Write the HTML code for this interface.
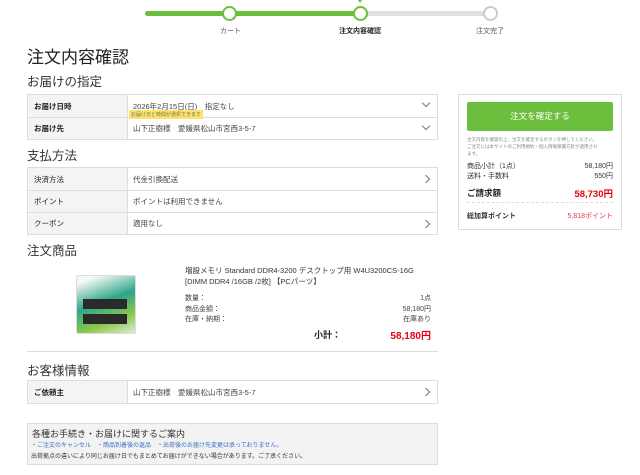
<!DOCTYPE html><html><head><meta charset="utf-8"><style>
*{margin:0;padding:0;box-sizing:border-box}
body{width:640px;height:475px;background:#fff;font-family:"Liberation Sans","Noto Sans CJK JP",sans-serif;color:#333;position:relative;overflow:hidden}
.a{position:absolute;white-space:nowrap}
.t{position:absolute;left:27px;width:411px;border:1px solid #ddd;font-size:7.5px}
.r{height:22px;display:flex;border-top:1px solid #ddd;align-items:center;position:relative}
.r:first-child{border-top:none}
.l{width:100px;height:100%;background:#f4f4f4;border-right:1px solid #ddd;padding-left:6px;display:flex;align-items:center;font-weight:bold;color:#222}
.v{padding-left:5px;color:#444}
.ch{position:absolute;right:8px;top:6px;width:6px;height:6px;border-right:1px solid #777;border-bottom:1px solid #777}
.dn{transform:rotate(45deg);top:5px}
.rt{transform:rotate(-45deg);top:8px}
h2{position:absolute;left:27px;font-size:12.5px;font-weight:normal;color:#333}
.c{position:absolute;width:15px;height:15px;border-radius:50%;background:#fff;border:2px solid #6cbf3c;top:6px}
</style></head><body>
<div class="a" style="left:145px;top:11px;width:345px;height:5px;background:#e0e0e0;border-radius:3px"></div>
<div class="a" style="left:145px;top:11px;width:216px;height:5px;background:#6cbf3c;border-radius:3px"></div>
<div class="c" style="left:222px"></div>
<div class="c" style="left:353px"></div>
<div class="c" style="left:483px;border-color:#ccc"></div>
<div class="a" style="left:358px;top:0;width:0;height:0;border-left:2px solid transparent;border-right:2px solid transparent;border-top:3px solid #6cbf3c"></div>
<div class="a" style="left:220px;top:26px;font-size:7px;color:#555">カート</div>
<div class="a" style="left:339px;top:26px;font-size:7px;font-weight:bold;color:#222">注文内容確認</div>
<div class="a" style="left:476px;top:26px;font-size:7px;color:#555">注文完了</div>
<div class="a" style="left:27px;top:43px;font-size:17px;color:#222">注文内容確認</div>
<h2 style="top:71px">お届けの指定</h2>
<div class="t" style="top:94px">
<div class="r"><div class="l">お届け日時</div><div class="v">2026年2月15日(日)　指定なし</div><div class="ch dn"></div></div>
<div class="r"><div class="l">お届け先</div><div class="v">山下正樹様　愛媛県松山市宮西3-5-7</div><div class="ch dn"></div></div>
</div>
<div class="a" style="left:129px;top:110px;background:#fde36b;font-size:5px;padding:1px 2px;color:#775">お届け日と時間が選択できます</div>
<h2 style="top:145px">支払方法</h2>
<div class="t" style="top:167px">
<div class="r"><div class="l" style="font-weight:normal">決済方法</div><div class="v">代金引換配送</div><div class="ch rt"></div></div>
<div class="r"><div class="l" style="font-weight:normal">ポイント</div><div class="v">ポイントは利用できません</div></div>
<div class="r"><div class="l" style="font-weight:normal">クーポン</div><div class="v">適用なし</div><div class="ch rt"></div></div>
</div>
<h2 style="top:240px">注文商品</h2>
<div class="a" style="left:76px;top:275px;width:60px;height:59px;background:linear-gradient(160deg,#f4f8f2 10%,#2fa58a 45%,#8cc84b 75%,#dfe8d8);border-radius:2px;border:1px solid #ddd"></div>
<div class="a" style="left:83px;top:299px;width:44px;height:10px;background:#2a2a2a"></div>
<div class="a" style="left:83px;top:314px;width:44px;height:10px;background:#2a2a2a"></div>
<div class="a" style="left:185px;top:265px;font-size:7.5px;line-height:11px;color:#333">増設メモリ Standard DDR4-3200 デスクトップ用 W4U3200CS-16G<br>[DIMM DDR4 /16GB /2枚] 【PCパーツ】</div>
<div class="a" style="left:185px;top:294px;font-size:7px;line-height:10.5px;color:#444">数量：<br>商品金額：<br>在庫・納期：</div>
<div class="a" style="left:330px;top:294px;width:101px;text-align:right;font-size:7px;line-height:10.5px;color:#444">1点<br>58,180円<br>在庫あり</div>
<div class="a" style="left:314px;top:328px;font-size:9px;font-weight:bold;color:#222">小計：</div>
<div class="a" style="left:360px;top:327px;width:71px;text-align:right;font-size:10px;font-weight:bold;color:#e60012">58,180円</div>
<div class="a" style="left:27px;top:351px;width:411px;height:1px;background:#ddd"></div>
<h2 style="top:360px">お客様情報</h2>
<div class="t" style="top:380px;height:24px">
<div class="r"><div class="l">ご依頼主</div><div class="v">山下正樹様　愛媛県松山市宮西3-5-7</div><div class="ch rt"></div></div>
</div>
<div class="a" style="left:27px;top:423px;width:411px;height:42px;background:#f3f3f3;border:1px solid #ddd"></div>
<div class="a" style="left:32px;top:427px;font-size:9px;color:#333">各種お手続き・お届けに関するご案内</div>
<div class="a" style="left:31px;top:440px;font-size:6px;color:#3a6fc4">・ご注文のキャンセル　・商品到着後の返品　・出荷後のお届け先変更は承っておりません。</div>
<div class="a" style="left:31px;top:451px;font-size:6px;color:#333">出荷拠点の違いにより同じお届け日でもまとめてお届けができない場合があります。ご了承ください。</div>
<div class="a" style="left:458px;top:94px;width:164px;height:136px;border:1px solid #ddd"></div>
<div class="a" style="left:467px;top:102px;width:146px;height:29px;background:#6cbf3c;border-radius:2px;color:#fff;font-size:8.5px;text-align:center;line-height:29px">注文を確定する</div>
<div class="a" style="left:467px;top:136px;font-size:4.5px;line-height:7px;color:#888">注文内容を確認の上、注文を確定するボタンを押してください。<br>ご注文には本サイトのご利用規約・個人情報保護方針が適用され<br>ます。</div>
<div class="a" style="left:467px;top:162px;font-size:7px;line-height:10px;color:#333">商品小計（1点）<br>送料・手数料</div>
<div class="a" style="left:540px;top:162px;width:73px;text-align:right;font-size:7px;line-height:10px;color:#333">58,180円<br>550円</div>
<div class="a" style="left:467px;top:187px;font-size:8.5px;font-weight:bold;color:#222">ご請求額</div>
<div class="a" style="left:540px;top:186px;width:73px;text-align:right;font-size:9.5px;font-weight:bold;color:#e60012">58,730円</div>
<div class="a" style="left:467px;top:202px;width:146px;border-top:1px dashed #ddd"></div>
<div class="a" style="left:467px;top:211px;font-size:7px;font-weight:bold;color:#333">総加算ポイント</div>
<div class="a" style="left:540px;top:211px;width:73px;text-align:right;font-size:7px;color:#e0404a">5,818ポイント</div>
</body></html>
